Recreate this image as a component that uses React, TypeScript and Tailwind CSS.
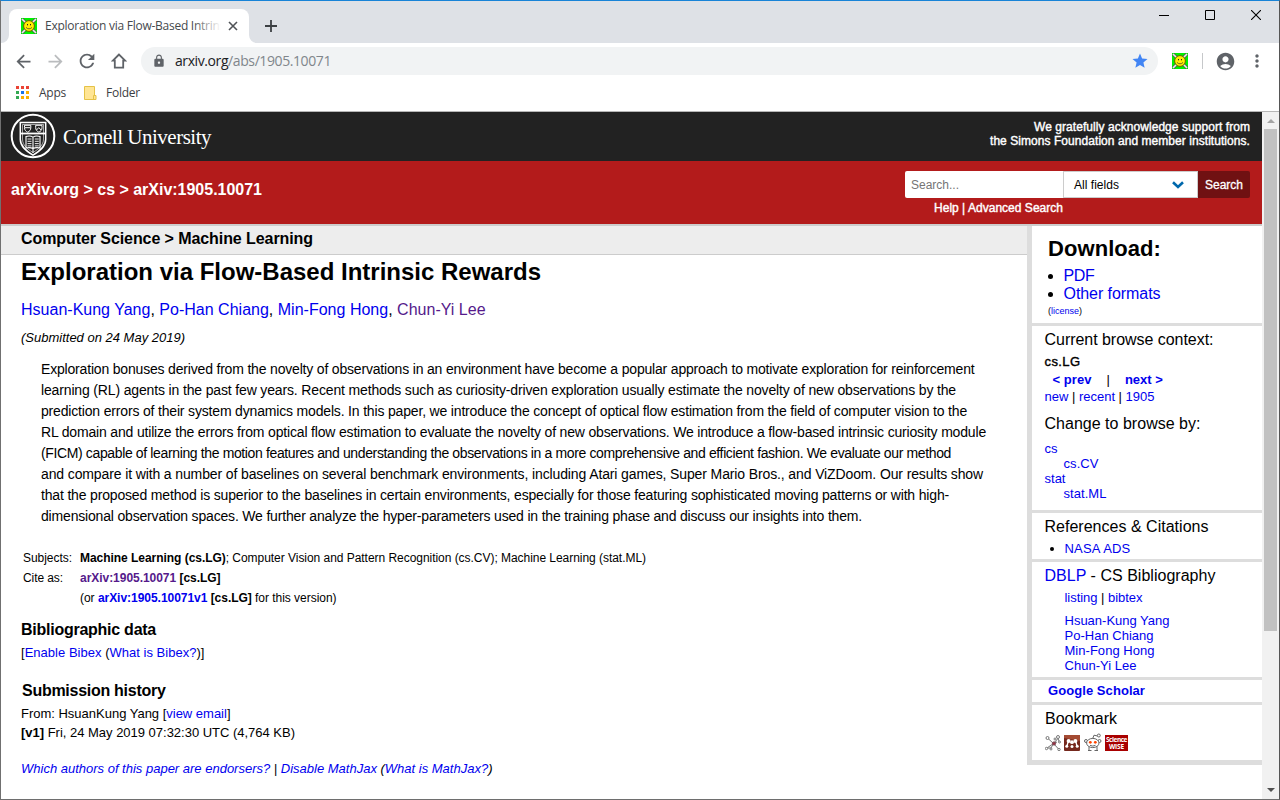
import { useLayoutEffect, useRef, type ReactNode } from "react";
import {
  MdAccountCircle,
  MdArrowBack,
  MdArrowForward,
  MdLock,
  MdMoreVert,
  MdRefresh,
  MdStar,
} from "react-icons/md";

/** A single line of text whose tracking is adjusted so that it spans `w` pixels. */
function Fit({ w, className = "", children }: { w: number; className?: string; children: ReactNode }) {
  const ref = useRef<HTMLSpanElement>(null);
  useLayoutEffect(() => {
    const el = ref.current;
    if (!el) return;
    el.style.letterSpacing = "0px";
    const n = el.textContent?.length ?? 1;
    el.style.letterSpacing = `${(w - el.getBoundingClientRect().width) / n}px`;
  }, [w]);
  return (
    <span ref={ref} className={`inline-block whitespace-pre align-top ${className}`}>
      {children}
    </span>
  );
}

function A({ children, visited = false }: { children: ReactNode; visited?: boolean }) {
  return (
    <a href="#" className={visited ? "text-[#551a8b]" : "text-[#0000ee]"}>
      {children}
    </a>
  );
}

function Smiley() {
  return (
    <svg viewBox="0 0 16 16" className="size-4 shrink-0">
      <rect width="16" height="16" fill="#00f000" />
      <path d="M1 1l14 14M15 1L1 15" stroke="#555" strokeWidth="3" />
      <path d="M1 1l14 14M15 1L1 15" stroke="#eee" strokeWidth="1.6" />
      <circle cx="8" cy="8" r="5.4" fill="#ffee00" stroke="#6b5b00" strokeWidth="1" />
      <rect x="6" y="6" width="1" height="1.300" fill="#222" />
      <rect x="9" y="6" width="1" height="1.300" fill="#222" />
      <path d="M5 9.4c1.600 1.900 4.400 1.900 6 0" stroke="#443" fill="none" strokeWidth="0.8" />
    </svg>
  );
}

function Seal() {
  return (
    <svg viewBox="0 0 46 46" className="h-[46px] w-[46px] shrink-0" fill="none" stroke="#fff">
      <circle cx="23" cy="23" r="21.3" strokeWidth="2" />
      <path d="M10.300 9.500h25.400v17c0 7-6 11.500-12.700 15.700-6.700-4.200-12.700-8.700-12.700-15.700z" strokeWidth="1.500" />
      <path d="M12.500 11.500h21v14.500c0 6.500-5 10-10.500 13.500-5.500-3.500-10.500-7-10.500-13.500z" strokeWidth="0.6" />
      <path d="M11 20.500h24" strokeWidth="1.800" />
      <path d="M14.500 12.300h6.300v2.400c0 2.400-1.300 3.600-3.100 4.500-1.900-.9-3.200-2.100-3.200-4.500zM25.700 12.300H32v2.400c0 2.400-1.300 3.600-3.100 4.500-1.900-.9-3.200-2.100-3.200-4.500z" />
      <path d="M15 14.700h5.500M26.500 17l2.300-2.400 2.300 2.400" />
      <path d="M16 23.500c2.500-.7 5-.7 7 .6 2-1.300 4.500-1.300 7-.6v11.500c-2.500-.6-5-.5-7 .6-2-1.100-4.500-1.200-7-.6zM23 24v16" strokeWidth="1.100" />
      <path d="M17.500 26h4M17.500 28.300h4M17.500 30.600h4M17.500 32.900h4M24.800 26h4M24.800 28.300h4M24.800 30.600h4M24.800 32.900h4" strokeWidth="0.9" />
    </svg>
  );
}

const APP_COLORS = [
  "bg-[#ea4335]", "bg-[#ea4335]", "bg-[#ea4335]",
  "bg-[#34a853]", "bg-[#1a73e8]", "bg-[#fbaf00]",
  "bg-[#34a853]", "bg-[#fbaf00]", "bg-[#fbaf00]",
];

function TabStrip() {
  return (
    <div className="flex h-[42px] items-start bg-[#dee1e6]">
      <div className="flex h-full w-2 items-end">
        <svg viewBox="0 0 8 8" className="size-2"><path d="M8 0v8H0a8 8 0 0 0 8-8z" fill="#fff" /></svg>
      </div>
      <div className="mt-2 flex h-[34px] w-[240px] items-center rounded-t-lg bg-white pl-3">
        <Smiley />
        <div className="relative ml-2 h-5 w-[176px] overflow-hidden font-['Open_Sans',sans-serif] text-[12px] leading-5 text-[#45494d]">
          <Fit w={180}>Exploration via Flow-Based Intrins</Fit>
          <span className="absolute inset-y-0 right-0 w-7 bg-gradient-to-r from-white/0 to-white" />
        </div>
        <svg viewBox="0 0 10 10" className="ml-[7px] size-[10px]"><path d="M1 1l8 8M9 1L1 9" stroke="#505357" strokeWidth="1.6" /></svg>
      </div>
      <div className="flex h-full w-2 items-end">
        <svg viewBox="0 0 8 8" className="size-2"><path d="M0 0v8h8a8 8 0 0 1-8-8z" fill="#fff" /></svg>
      </div>
      <svg viewBox="0 0 12 12" className="mt-[19px] ml-2 size-3"><path d="M6 0v12M0 6h12" stroke="#3c4043" strokeWidth="1.8" /></svg>
      <div className="mt-[9px] ml-auto flex w-[120px] justify-between pr-[18px]">
        <svg viewBox="0 0 10 10" className="size-[10px]"><path d="M0 5.500h10" stroke="#000" /></svg>
        <svg viewBox="0 0 10 10" className="size-[10px]"><path d="M.5.5h9v9h-9z" stroke="#000" fill="none" /></svg>
        <svg viewBox="0 0 10 10" className="size-[10px]"><path d="M0 0l10 10M10 0L0 10" stroke="#000" strokeWidth="1.100" /></svg>
      </div>
    </div>
  );
}

function Toolbar() {
  return (
    <div className="flex h-[37px] items-center bg-white pb-px pl-3 text-[#5f6368]">
      <MdArrowBack className="size-[21px] shrink-0" />
      <MdArrowForward className="ml-[11px] size-[21px] shrink-0 text-[#babcbe]" />
      <MdRefresh className="ml-[10px] size-[22px] shrink-0" />
      <svg viewBox="0 0 16 16" className="ml-[13px] size-4 shrink-0"><path d="M8 1.500L1.900 7.700h1.900v7h8.400v-7h1.900z" fill="none" stroke="currentColor" strokeWidth="1.800" /></svg>
      <div className="ml-[14px] flex h-7 w-[1017px] shrink-0 items-center rounded-full bg-[#f1f3f4] pl-[11px] pr-[9px]">
        <MdLock className="size-[14px]" />
        <div className="ml-[9px] h-5 font-['Open_Sans',sans-serif] text-[14px] leading-5 text-[#80868b]">
          <Fit w={156}><span className="text-[#202124]">arxiv.org</span>/abs/1905.10071</Fit>
        </div>
        <MdStar className="ml-auto size-[18px] text-[#4285f4]" />
      </div>
      <div className="ml-[14px]"><Smiley /></div>
      <div className="ml-[14px] h-4 w-px bg-[#c6c8ca]" />
      <MdAccountCircle className="ml-[12px] size-[21px] shrink-0" />
      <MdMoreVert className="ml-[11px] size-5 shrink-0" />
    </div>
  );
}

function BookmarksBar() {
  return (
    <div className="flex h-[31px] items-start bg-white pt-[3px] pl-[15px] font-['Open_Sans',sans-serif] text-[12px] leading-5 text-[#3c4043]">
      <div className="mt-[3px] grid grid-cols-3 gap-[2px]">
        {APP_COLORS.map((c, i) => <span key={i} className={`size-[3px] ${c}`} />)}
      </div>
      <div className="ml-[10px]"><Fit w={27}>Apps</Fit></div>
      <svg viewBox="0 0 13 14" className="mt-[3px] ml-[18px] h-[14px] w-[13px]">
        <path d="M.5.500h10v9h1.500v4H.5z" fill="#ffe594" stroke="#e5c247" />
        <path d="M9.500 13.500v-4h2.500" fill="none" stroke="#e5c247" />
      </svg>
      <div className="ml-[9px]"><Fit w={34}>Folder</Fit></div>
    </div>
  );
}

function Header() {
  return (
    <>
      <div className="flex h-[49px] justify-between bg-[#222] pr-3 pl-[9px] text-white">
        <div className="flex pt-px">
          <Seal />
          <div className="ml-[7px] pt-[12px] font-['Liberation_Serif',serif] text-[21px] leading-6"><Fit w={148}>Cornell University</Fit></div>
        </div>
        <div className="pt-2 text-right text-[12px] leading-[14px] [-webkit-text-stroke:0.4px_white]">
          <div><Fit w={216}>We gratefully acknowledge support from</Fit></div>
          <div><Fit w={260}>the Simons Foundation and member institutions.</Fit></div>
        </div>
      </div>
      <div className="flex h-[63px] justify-between bg-[#b31b1b] pr-3 pl-[10px] text-white">
        <div className="pt-[19px] text-[16px] leading-5 font-bold"><Fit w={251}>arXiv.org &gt; cs &gt; arXiv:1905.10071</Fit></div>
        <div className="pt-[10px] text-[12px]">
          <div className="flex h-[27px]">
            <div className="w-[158px] rounded-l-[2px] bg-white pl-[6px] leading-[28px] text-[#757575]"><Fit w={48}>Search...</Fit></div>
            <div className="flex w-[135px] items-center justify-between border border-[#ccc] bg-white pr-[13px] pl-[10px] leading-[26px] text-black">
              <Fit w={45}>All fields</Fit>
              <svg viewBox="0 0 12 8" className="mt-px h-2 w-3"><path d="M1 1.300l5 4.700 5-4.700" fill="none" stroke="#0068ac" strokeWidth="2.600" /></svg>
            </div>
            <div className="w-[52px] rounded-r-[2px] bg-[#701112] pl-[7px] leading-[28px] [-webkit-text-stroke:0.3px_white]"><Fit w={38}>Search</Fit></div>
          </div>
          <div className="pl-[29px] leading-5 [-webkit-text-stroke:0.4px_white]"><Fit w={129}>Help | Advanced Search</Fit></div>
        </div>
      </div>
      <div className="h-[2px] bg-[#ccc]" />
    </>
  );
}

const ABSTRACT: [number, string][] = [
  [933.5, "Exploration bonuses derived from the novelty of observations in an environment have become a popular approach to motivate exploration for reinforcement"],
  [915, "learning (RL) agents in the past few years. Recent methods such as curiosity-driven exploration usually estimate the novelty of new observations by the"],
  [926, "prediction errors of their system dynamics models. In this paper, we introduce the concept of optical flow estimation from the field of computer vision to the"],
  [945, "RL domain and utilize the errors from optical flow estimation to evaluate the novelty of new observations. We introduce a flow-based intrinsic curiosity module"],
  [910, "(FICM) capable of learning the motion features and understanding the observations in a more comprehensive and efficient fashion. We evaluate our method"],
  [942, "and compare it with a number of baselines on several benchmark environments, including Atari games, Super Mario Bros., and ViZDoom. Our results show"],
  [908, "that the proposed method is superior to the baselines in certain environments, especially for those featuring sophisticated moving patterns or with high-"],
  [821, "dimensional observation spaces. We further analyze the hyper-parameters used in the training phase and discuss our insights into them."],
];

function Article() {
  return (
    <main className="w-[1026px]">
      <div className="h-[29px] border-b border-[#ccc] bg-[#ededed] pt-[3px] pl-5 text-[16px] leading-5 font-bold"><Fit w={292}>Computer Science &gt; Machine Learning</Fit></div>
      <div className="pl-5">
        <h1 className="mt-[2px] h-[30px] text-[24px] leading-[30px] font-bold"><Fit w={520}>Exploration via Flow-Based Intrinsic Rewards</Fit></h1>
        <div className="mt-[13px] h-5 text-[16px] leading-5">
          <Fit w={464.5}><A>Hsuan-Kung Yang</A>, <A>Po-Han Chiang</A>, <A>Min-Fong Hong</A>, <A visited>Chun-Yi Lee</A></Fit>
        </div>
        <div className="mt-2 h-5 text-[13px] leading-5 italic"><Fit w={164}>(Submitted on 24 May 2019)</Fit></div>
        <div className="mt-[11px] pl-5 text-[14px] leading-[21px]">
          {ABSTRACT.map(([w, line]) => <div key={line} className="h-[21px]"><Fit w={w}>{line}</Fit></div>)}
        </div>
        <div className="mt-[21px] grid grid-cols-[57px_1fr] pl-[2px] text-[12px] leading-5">
          <div><Fit w={49}>Subjects:</Fit></div>
          <div><Fit w={566}><b>Machine Learning (cs.LG)</b>; Computer Vision and Pattern Recognition (cs.CV); Machine Learning (stat.ML)</Fit></div>
          <div><Fit w={40}>Cite as:</Fit></div>
          <div className="font-bold"><Fit w={140.5}><A visited>arXiv:1905.10071</A> [cs.LG]</Fit></div>
          <div className="col-start-2"><Fit w={256.5}>(or <b><A>arXiv:1905.10071v1</A> [cs.LG]</b> for this version)</Fit></div>
        </div>
        <h2 className="mt-3 h-5 text-[16px] leading-5 font-bold"><Fit w={135}>Bibliographic data</Fit></h2>
        <div className="mt-[3px] h-5 text-[13px] leading-5"><Fit w={183.5}>[<A>Enable Bibex</A> (<A>What is Bibex?</A>)]</Fit></div>
        <h2 className="mt-[18px] h-5 pl-px text-[16px] leading-5 font-bold"><Fit w={143.500}>Submission history</Fit></h2>
        <div className="mt-[3px] h-[19px] text-[13px] leading-5"><Fit w={209.5}>From: HsuanKung Yang [<A>view email</A>]</Fit></div>
        <div className="h-5 text-[13px] leading-5"><Fit w={274}><b>[v1]</b> Fri, 24 May 2019 07:32:30 UTC (4,764 KB)</Fit></div>
        <div className="mt-4 h-5 text-[13px] leading-5 italic"><Fit w={471.5}><A>Which authors of this paper are endorsers?</A> | <A>Disable MathJax</A> (<A>What is MathJax?</A>)</Fit></div>
      </div>
    </main>
  );
}

function ShareIcons() {
  return (
    <div className="mt-[5px] flex h-[17px] items-end">
      <svg viewBox="0 0 16 16" className="size-4" fill="none" stroke="#777">
        <path d="M8.500 8.500L2.500 3M8.500 8.500L13 3.500M8.500 8.500L2 13M8.500 8.500l5.500 6M8.500 8.500L12 7M13 3.500l1.500 4M2 13h4l2.500-4.500" />
        <g fill="#fff"><circle cx="2.500" cy="3" r="1.500" /><circle cx="13" cy="2" r="1.500" /><circle cx="10" cy="4" r="1" /><circle cx="1.500" cy="13.500" r="1.200" /><circle cx="6" cy="14" r="1" /><circle cx="14" cy="14.500" r="1.200" /><circle cx="14.500" cy="7" r="1" /></g>
        <circle cx="9" cy="8.500" r="1.600" fill="#9b3040" stroke="#784450" />
      </svg>
      <svg viewBox="0 0 16 16" className="ml-[3px] size-4">
        <rect width="16" height="16" rx="1" fill="#75281d" />
        <path d="M0 1q0-1 1-1h14q1 0 1 1v5L0 3z" fill="#a44a32" />
        <g fill="#fff"><circle cx="4.600" cy="6" r="2" /><circle cx="8" cy="7.200" r="1.900" /><circle cx="11.400" cy="6" r="2" /><circle cx="2.800" cy="11.300" r="1.500" /><circle cx="8" cy="11.500" r="1.500" /><circle cx="13.200" cy="11.300" r="1.500" /></g>
        <path d="M4.200 6.500L3 11M11.800 6.500l1.200 4.500" stroke="#fff" strokeWidth="1.300" />
      </svg>
      <svg viewBox="0 0 18 18" className="ml-1 size-[18px]" fill="none" stroke="#666">
        <path d="M8.500 6L10 2.200l3.500.8" />
        <circle cx="14.800" cy="2.500" r="1.500" fill="#fff" />
        <circle cx="2" cy="8" r="1.500" fill="#fff" /><circle cx="15.500" cy="8" r="1.500" fill="#fff" />
        <path d="M5 13v4.500M13 13v4.500M4 17.500h3.500M10.500 17.500H14" />
        <ellipse cx="8.800" cy="10" rx="6.200" ry="4.600" fill="#fff" />
        <circle cx="6.300" cy="9.300" r="1.400" fill="#ff4500" stroke="none" /><circle cx="11.300" cy="9.300" r="1.400" fill="#ff4500" stroke="none" />
        <path d="M6 12.300q2.800 1.600 5.500 0" />
      </svg>
      <div className="ml-[3px] h-4 w-[23px] bg-[#a90000] text-center font-['Open_Sans',sans-serif] text-[6.500px] leading-[7px] font-bold text-white">
        <div className="pt-px"><Fit w={21}>Science</Fit></div>
        <div><Fit w={15}>WISE</Fit></div>
      </div>
    </div>
  );
}

function Sidebar() {
  return (
    <aside className="h-[539px] w-[235px] border-b-[5px] border-l-[5px] border-[#ddd] text-[13px]">
      <section className="h-[100px] border-b-[3px] border-[#ddd] pt-2 pl-4">
        <div className="h-[30px] text-[22px] leading-[30px] font-bold"><Fit w={113}>Download:</Fit></div>
        <ul className="mt-[3px] text-[16px] leading-[18px]">
          <li className="flex h-[18px]"><span className="mt-[7px] mr-[10.5px] size-[5px] rounded-full bg-black" /><Fit w={31}><A>PDF</A></Fit></li>
          <li className="flex h-[18px]"><span className="mt-[7px] mr-[10.5px] size-[5px] rounded-full bg-black" /><Fit w={97}><A>Other formats</A></Fit></li>
        </ul>
        <div className="text-[9px] leading-[17px]"><Fit w={34}>(<A>license</A>)</Fit></div>
      </section>
      <section className="h-[187px] border-b-[3px] border-[#ddd] pt-1 pl-[12.5px]">
        <div className="h-5 text-[16px] leading-5"><Fit w={169}>Current browse context:</Fit></div>
        <div className="mt-[2px] h-5 leading-5 [-webkit-text-stroke:0.4px_black]"><Fit w={36}>cs.LG</Fit></div>
        <div className="-mt-[2px] flex h-5 pl-2 leading-5 font-bold"><Fit w={39}><A>&lt; prev</A></Fit><span className="ml-[15px] font-normal">|</span><span className="ml-[15px]"><Fit w={38}><A>next &gt;</A></Fit></span></div>
        <div className="-mt-[3px] h-5 leading-5"><Fit w={110}><A>new</A> | <A>recent</A> | <A>1905</A></Fit></div>
        <div className="mt-[7px] h-5 text-[16px] leading-5"><Fit w={156}>Change to browse by:</Fit></div>
        <div className="mt-[7px] leading-[15px]">
          <div className="h-[15px]"><Fit w={13}><A>cs</A></Fit></div>
          <div className="h-[15px] pl-[19px]"><Fit w={35}><A>cs.CV</A></Fit></div>
          <div className="h-[15px]"><Fit w={21}><A>stat</A></Fit></div>
          <div className="h-[15px] pl-[19px]"><Fit w={43}><A>stat.ML</A></Fit></div>
        </div>
      </section>
      <section className="h-[49px] border-b-[3px] border-[#ddd] pt-1 pl-[12.5px]">
        <div className="h-5 text-[16px] leading-5"><Fit w={164}>References &amp; Citations</Fit></div>
        <div className="mt-[2px] flex h-5 leading-5"><span className="mt-[8px] mr-[11px] ml-[5px] size-1 rounded-full bg-black" /><Fit w={66}><A>NASA ADS</A></Fit></div>
      </section>
      <section className="h-[118px] border-b-[3px] border-[#ddd] pt-1 pl-[12.5px]">
        <div className="h-5 text-[16px] leading-5"><Fit w={171}><A>DBLP</A> - CS Bibliography</Fit></div>
        <div className="mt-[2px] h-5 pl-5 leading-5"><Fit w={78}><A>listing</A> | <A>bibtex</A></Fit></div>
        <div className="mt-[5px] pl-5 leading-[15px]">
          <div className="h-[15px]"><Fit w={105}><A>Hsuan-Kung Yang</A></Fit></div>
          <div className="h-[15px]"><Fit w={89}><A>Po-Han Chiang</A></Fit></div>
          <div className="h-[15px]"><Fit w={90}><A>Min-Fong Hong</A></Fit></div>
          <div className="h-[15px]"><Fit w={72}><A>Chun-Yi Lee</A></Fit></div>
        </div>
      </section>
      <section className="h-[25px] border-b-[3px] border-[#ddd] pt-px pl-[16px] leading-5 font-bold"><Fit w={97}><A>Google Scholar</A></Fit></section>
      <section className="pt-1 pl-[13px]">
        <div className="h-5 text-[16px] leading-5"><Fit w={72}>Bookmark</Fit></div>
        <ShareIcons />
      </section>
    </aside>
  );
}

export default function App() {
  return (
    <div className="flex h-[800px] w-[1280px] flex-col overflow-hidden border border-t-[#1883d7] border-r-[#555] border-b-[#6e6e6e] border-l-[#707070] bg-white font-['Liberation_Sans',Arial,sans-serif] text-black">
      <TabStrip />
      <Toolbar />
      <BookmarksBar />
      <div className="flex min-h-0 flex-1 border-t border-[#b6b6b6]">
        <div className="w-[1261px] overflow-hidden">
          <Header />
          <div className="flex"><Article /><Sidebar /></div>
        </div>
        <div className="flex w-[17px] flex-col items-center bg-[#f1f1f1]">
          <svg viewBox="0 0 8 4" className="mt-[7px] h-1 w-2"><path d="M0 4l4-4 4 4z" fill="#a3a3a3" /></svg>
          <div className="mt-[6px] h-[502px] w-[13px] bg-[#c1c1c1]" />
          <svg viewBox="0 0 8 4" className="mt-auto mb-[7px] h-1 w-2"><path d="M0 0l4 4 4-4z" fill="#505050" /></svg>
        </div>
      </div>
    </div>
  );
}
